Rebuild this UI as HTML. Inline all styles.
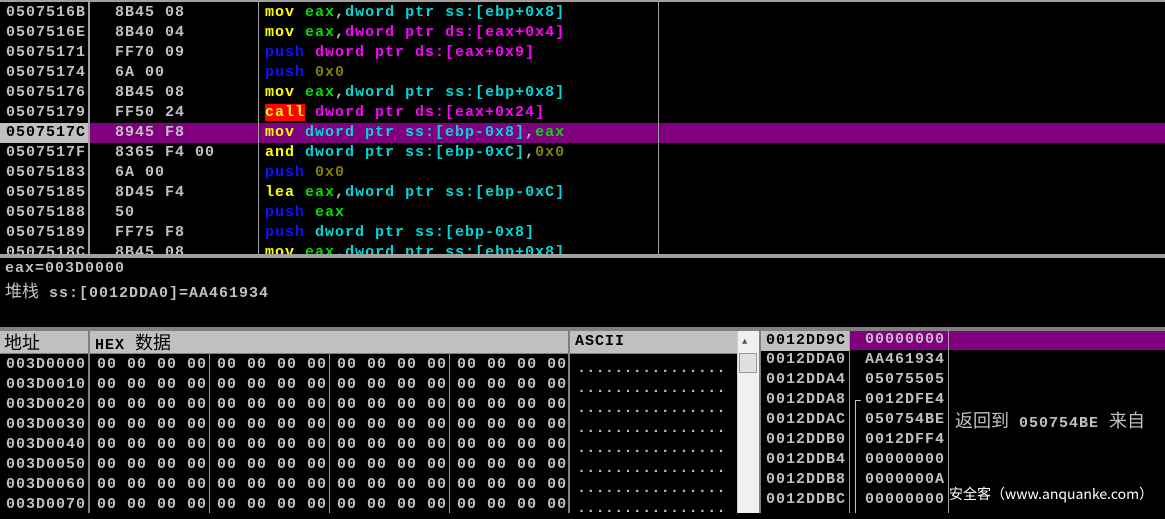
<!DOCTYPE html>
<html><head><meta charset="utf-8"><style>
*{margin:0;padding:0;box-sizing:border-box}
body{width:1165px;height:513px;background:#000;position:relative;overflow:hidden;font-family:"Liberation Mono","Noto Sans CJK SC",monospace;font-weight:bold;font-size:15px;letter-spacing:1px;color:#c0c0c0}
.a{position:absolute;white-space:pre;line-height:20px}
.l{position:absolute;background:#a0a0a0}
.y{color:#ffff00}.g{color:#00e000}.c{color:#00d8d8}.m{color:#ff00ff}.b{color:#1010ff}.o{color:#808000}
.cjk{font-family:"Noto Sans CJK SC","WenQuanYi Zen Hei",sans-serif;font-weight:normal;letter-spacing:0}
</style></head><body>
<div class="a" style="left:0;top:123px;width:1165px;height:20px;background:#800080"></div>
<div class="a" style="left:0;top:123px;width:88px;height:20px;background:#c0c0c0"></div>
<div class="l" style="left:88px;top:0;width:2px;height:256px"></div>
<div class="l" style="left:258px;top:0;width:1px;height:256px"></div>
<div class="l" style="left:658px;top:0;width:1px;height:256px"></div>
<div class="l" style="left:0;top:0;width:1165px;height:2px"></div>
<div class="a" style="left:6px;top:3px">0507516B
0507516E
05075171
05075174
05075176
05075179
<span style="color:#000">0507517C</span>
0507517F
05075183
05075185
05075188
05075189
0507518C</div>
<div class="a" style="left:115px;top:3px">8B45 08
8B40 04
FF70 09
6A 00
8B45 08
FF50 24
8945 F8
8365 F4 00
6A 00
8D45 F4
50
FF75 F8
8B45 08</div>
<div class="a" style="left:265px;top:3px"><span class="y">mov</span> <span class="g">eax</span>,<span class="c">dword ptr ss:[ebp+0x8]</span>
<span class="y">mov</span> <span class="g">eax</span>,<span class="m">dword ptr ds:[eax+0x4]</span>
<span class="b">push</span> <span class="m">dword ptr ds:[eax+0x9]</span>
<span class="b">push</span> <span class="o">0x0</span>
<span class="y">mov</span> <span class="g">eax</span>,<span class="c">dword ptr ss:[ebp+0x8]</span>
<span class="y" style="background:#f00">call</span> <span class="m">dword ptr ds:[eax+0x24]</span>
<span class="y">mov</span> <span class="c">dword ptr ss:[ebp-0x8]</span>,<span class="g">eax</span>
<span class="y">and</span> <span class="c">dword ptr ss:[ebp-0xC]</span>,<span class="o">0x0</span>
<span class="b">push</span> <span class="o">0x0</span>
<span class="y">lea</span> <span class="g">eax</span>,<span class="c">dword ptr ss:[ebp-0xC]</span>
<span class="b">push</span> <span class="g">eax</span>
<span class="b">push</span> <span class="c">dword ptr ss:[ebp-0x8]</span>
<span class="y">mov</span> <span class="g">eax</span>,<span class="c">dword ptr ss:[ebp+0x8]</span></div>
<div class="l" style="left:0;top:254px;width:1165px;height:4px;background:#a0a0a0"></div>
<div class="a" style="left:5px;top:258px;background:#000;width:1165px;height:70px;line-height:21px">eax=003D0000
<span class="cjk" style="font-size:17px">堆栈</span> ss:[0012DDA0]=AA461934</div>
<div class="l" style="left:0;top:327px;width:1165px;height:4px;background:#808080"></div>
<div class="a" style="left:0;top:331px;width:737px;height:23px;background:#c0c0c0"></div>
<div class="a cjk" style="left:4px;top:332px;color:#000;font-size:18px">地址</div>
<div class="a" style="left:95px;top:332px;color:#000">HEX <span class="cjk" style="font-size:18px">数据</span></div>
<div class="a" style="left:575px;top:332px;color:#000">ASCII</div>
<div class="l" style="left:88px;top:331px;width:2px;height:182px;background:#808080"></div>
<div class="l" style="left:568px;top:331px;width:2px;height:182px;background:#808080"></div>
<div class="l" style="left:209px;top:354px;width:1px;height:159px"></div>
<div class="l" style="left:329px;top:354px;width:1px;height:159px"></div>
<div class="l" style="left:449px;top:354px;width:1px;height:159px"></div>
<div class="l" style="left:0;top:353px;width:737px;height:1px;background:#808080"></div>
<div class="a" style="left:6px;top:355px">003D0000
003D0010
003D0020
003D0030
003D0040
003D0050
003D0060
003D0070</div>
<div class="a" style="left:97px;top:355px">00 00 00 00 00 00 00 00 00 00 00 00 00 00 00 00
00 00 00 00 00 00 00 00 00 00 00 00 00 00 00 00
00 00 00 00 00 00 00 00 00 00 00 00 00 00 00 00
00 00 00 00 00 00 00 00 00 00 00 00 00 00 00 00
00 00 00 00 00 00 00 00 00 00 00 00 00 00 00 00
00 00 00 00 00 00 00 00 00 00 00 00 00 00 00 00
00 00 00 00 00 00 00 00 00 00 00 00 00 00 00 00
00 00 00 00 00 00 00 00 00 00 00 00 00 00 00 00</div>
<div class="a" style="left:577px;top:359px;letter-spacing:0.3px">................
................
................
................
................
................
................
................</div>
<div class="a" style="left:737px;top:331px;width:22px;height:182px;background:#f0f0f0;border-left:1px solid #ccc"></div>
<div class="a" style="left:742px;top:332px;font-size:9px;color:#555">▲</div>
<div class="a" style="left:739px;top:353px;width:18px;height:20px;background:#e0e0e0;border:1px solid #999"></div>
<div class="l" style="left:759px;top:331px;width:2px;height:182px;background:#808080"></div>
<div class="a" style="left:761px;top:331px;width:88px;height:20px;background:#c0c0c0"></div>
<div class="a" style="left:850px;top:331px;width:315px;height:19px;background:#800080"></div>
<div class="l" style="left:849px;top:331px;width:1px;height:182px"></div>
<div class="l" style="left:948px;top:331px;width:1px;height:182px"></div>
<div class="a" style="left:766px;top:331px;color:#000">0012DD9C</div>
<div class="a" style="left:766px;top:350px">0012DDA0
0012DDA4
0012DDA8
0012DDAC
0012DDB0
0012DDB4
0012DDB8
0012DDBC</div>
<div class="a" style="left:865px;top:330px">00000000
AA461934
05075505
0012DFE4
050754BE
0012DFF4
00000000
0000000A
00000000</div>
<div class="l" style="left:855px;top:400px;width:1px;height:113px;background:#c0c0c0"></div>
<div class="l" style="left:855px;top:400px;width:6px;height:1px;background:#c0c0c0"></div>
<div class="a" style="left:955px;top:410px"><span class="cjk" style="font-size:18px">返回到</span> 050754BE <span class="cjk" style="font-size:18px">来自</span></div>
<div class="a cjk" style="left:949px;top:484px;color:#fff;font-size:14px">安全客（www.anquanke.com）</div>
</body></html>
